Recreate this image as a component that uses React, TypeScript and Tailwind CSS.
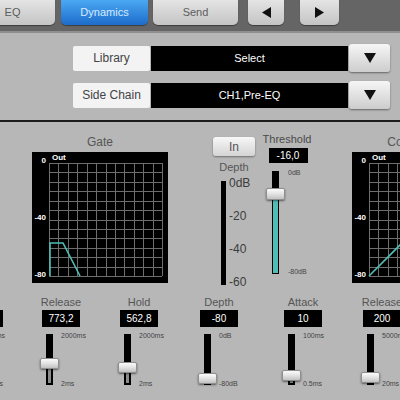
import React from "react";

const TEAL = "#4dbfb6";

function Tri({ dir }: { dir: "left" | "right" | "down" }) {
  if (dir === "down") {
    return (
      <svg width="12" height="10" viewBox="0 0 12 10">
        <polygon points="0,0 12,0 6,10" fill="#111" />
      </svg>
    );
  }
  return (
    <svg width="9" height="11" viewBox="0 0 9 11">
      <polygon points={dir === "left" ? "9,0 9,11 0,5.5" : "0,0 0,11 9,5.5"} fill="#111" />
    </svg>
  );
}

function Tab({ className, children }: { className: string; children: React.ReactNode }) {
  return (
    <div
      className={`flex h-[25px] shrink-0 items-center justify-center rounded-b-[5px] bg-gradient-to-b from-[#e4e4e4] to-[#c4c4c4] text-[11px] text-[#5c5c5c] shadow-[0_1px_1px_rgba(0,0,0,0.4)] ${className}`}
    >
      {children}
    </div>
  );
}

function SelectRow({ label, value }: { label: string; value: string }) {
  return (
    <div className="flex h-[28px] items-center">
      <div className="flex h-[25px] w-[77px] items-center justify-center rounded-[2px] bg-[#f3f3f3] text-[12px] text-[#444]">
        {label}
      </div>
      <div className="ml-[1px] flex h-[25px] w-[197px] items-center justify-center bg-black text-[11px] text-white">
        {value}
      </div>
      <div className="ml-[1px] flex h-[28px] w-[41px] items-center justify-center rounded-[3px] bg-gradient-to-b from-[#f6f6f6] to-[#cdcdcd] shadow-[0_1px_2px_rgba(0,0,0,0.45)]">
        <Tri dir="down" />
      </div>
    </div>
  );
}

const GX = Array.from({ length: 13 }, (_, i) => Math.round(17 + (i * 113) / 12) + 0.5);
const GY = Array.from({ length: 13 }, (_, i) => Math.round(11 + (i * 113) / 12) + 0.5);

function Graph({ curve }: { curve: string }) {
  return (
    <svg width="136" height="131" viewBox="0 0 136 131" className="block bg-black">
      {GX.map((x, i) => (
        <line key={"v" + i} x1={x} x2={x} y1={11} y2={124} stroke="#6e6e6e" strokeWidth="1" shapeRendering="crispEdges" />
      ))}
      {GY.map((y, i) => (
        <line key={"h" + i} x1={17} x2={130} y1={y} y2={y} stroke="#6e6e6e" strokeWidth="1" shapeRendering="crispEdges" />
      ))}
      <g fill="#fff" fontSize="8" fontWeight="bold" fontFamily="'Liberation Sans', Arial, sans-serif">
        <text x="14" y="11" textAnchor="end">0</text>
        <text x="14" y="68" textAnchor="end">-40</text>
        <text x="14" y="125" textAnchor="end">-80</text>
        <text x="20" y="8">Out</text>
      </g>
      <polyline points={curve} fill="none" stroke={TEAL} strokeWidth="1.6" />
    </svg>
  );
}

function Knob({ top, className }: { top: number; className: string }) {
  return (
    <div
      className={`absolute left-[-6px] w-[19px] rounded-[2px] border border-[#8e8e8e] bg-gradient-to-b from-[#fbfbfb] via-[#e2e2e2] to-[#c2c2c2] shadow-[0_1px_2px_rgba(0,0,0,0.5)] ${className}`}
      style={{ top }}
    />
  );
}

type Param = {
  label: string;
  value: string;
  max: string;
  min: string;
  knob: number;
  ml: string;
};

const PARAMS: Param[] = [
  { label: "Range", value: "30", max: "100ms", min: "0.5ms", knob: 30, ml: "ml-[-35px]" },
  { label: "Release", value: "773,2", max: "2000ms", min: "2ms", knob: 24, ml: "ml-[39px]" },
  { label: "Hold", value: "562,8", max: "2000ms", min: "2ms", knob: 28, ml: "ml-[40px]" },
  { label: "Depth", value: "-80", max: "0dB", min: "-80dB", knob: 39, ml: "ml-[42px]" },
  { label: "Attack", value: "10", max: "100ms", min: "0.5ms", knob: 36, ml: "ml-[46px]" },
  { label: "Release", value: "200", max: "5000ms", min: "20ms", knob: 38, ml: "ml-[41px]" },
];

function ParamColumn({ p }: { p: Param }) {
  return (
    <div className={`flex w-[38px] shrink-0 flex-col items-center ${p.ml}`}>
      <div className="whitespace-nowrap text-[11px] leading-[13px] text-[#555]">{p.label}</div>
      <div className="mt-[1px] flex h-[17px] w-[38px] items-center justify-center bg-black text-[10px] text-white">
        {p.value}
      </div>
      <div className="mt-[7px] flex h-[51px] w-full">
        <div className="relative ml-[4px] h-full w-[7px] shrink-0 bg-black">
          <div className="absolute bottom-[2px] left-[2px] right-[2px] bg-[#8c8c8c]" style={{ top: p.knob + 8 }} />
          <Knob top={p.knob} className="h-[11px]" />
        </div>
        <div className="ml-[8px] mt-[-3px] flex h-[57px] flex-col justify-between whitespace-nowrap text-[7px] leading-[9px] text-[#444]">
          <span>{p.max}</span>
          <span>{p.min}</span>
        </div>
      </div>
    </div>
  );
}

export default function App() {
  return (
    <div className="h-[400px] w-[400px] overflow-hidden bg-[#b7b7b7] font-['Liberation_Sans',Arial,sans-serif]">
      {/* tab bar */}
      <div className="flex h-[33px] border-b-2 border-[#8f8f8f] bg-[#656565]">
        <Tab className="ml-[-30px] w-[85px]">EQ</Tab>
        <div className="ml-[6px] flex h-[25px] w-[87px] shrink-0 items-center justify-center rounded-b-[5px] bg-gradient-to-b from-[#4ba8f2] to-[#1d6ccb] text-[11px] text-[#d6ebff] shadow-[0_1px_1px_rgba(0,0,0,0.4)]">
          Dynamics
        </div>
        <Tab className="ml-[5px] w-[85px]">Send</Tab>
        <Tab className="ml-[10px] w-[36px]">
          <Tri dir="left" />
        </Tab>
        <Tab className="ml-[16px] w-[39px]">
          <Tri dir="right" />
        </Tab>
      </div>

      {/* library / side chain */}
      <div className="flex h-[87px] flex-col gap-[9px] pl-[73px] pt-[11px]">
        <SelectRow label="Library" value="Select" />
        <SelectRow label="Side Chain" value="CH1,Pre-EQ" />
      </div>
      <div className="h-[2px] bg-[#1c1c1c]" />

      {/* graphs row */}
      <div className="flex h-[168px] items-start">
        <div className="ml-[32px] flex w-[136px] shrink-0 flex-col items-center">
          <div className="mt-[13px] text-[12px] leading-[14px] text-[#555]">Gate</div>
          <div className="mt-[3px]">
            <Graph curve="18,124 18,91 31,91 48,124" />
          </div>
        </div>

        <div className="ml-[45px] flex w-[42px] shrink-0 flex-col">
          <div className="mt-[15px] flex h-[19px] w-[42px] items-center justify-center rounded-[3px] bg-gradient-to-b from-[#f7f7f7] to-[#d4d4d4] text-[12px] text-[#555] shadow-[0_1px_2px_rgba(0,0,0,0.4)]">
            In
          </div>
          <div className="mt-[5px] text-center text-[11px] leading-[13px] text-[#555]">Depth</div>
          <div className="mt-[7px] flex">
            <div className="ml-[8px] h-[104px] w-[5px] bg-black" />
            <div className="ml-[3px] mt-[-4px] flex h-[111px] flex-col justify-between text-[12px] leading-[12px] text-[#3c3c3c]">
              <span>0dB</span>
              <span>-20</span>
              <span>-40</span>
              <span>-60</span>
            </div>
          </div>
        </div>

        <div className="ml-[11px] flex w-[42px] shrink-0 flex-col items-center">
          <div className="mt-[11px] whitespace-nowrap text-[11px] leading-[13px] text-[#4a4a4a]">Threshold</div>
          <div className="ml-[2px] mt-[2px] flex h-[15px] w-[39px] items-center justify-center bg-black text-[10px] text-white">
            -16,0
          </div>
          <div className="mt-[8px] flex h-[103px] w-full">
            <div className="relative ml-[6px] h-full w-[7px] shrink-0 bg-black">
              <div className="absolute bottom-[1px] left-[1px] right-[1px] top-[29px]" style={{ background: TEAL }} />
              <Knob top={17} className="h-[12px]" />
            </div>
            <div className="ml-[9px] mt-[-3px] flex h-[108px] flex-col justify-between whitespace-nowrap text-[7px] leading-[9px] text-[#444]">
              <span>0dB</span>
              <span>-80dB</span>
            </div>
          </div>
        </div>

        <div className="ml-[44px] flex w-[136px] shrink-0 flex-col items-center">
          <div className="mt-[13px] text-[12px] leading-[14px] text-[#555]">Compressor</div>
          <div className="mt-[3px]">
            <Graph curve="17,124 107,34 130,28" />
          </div>
        </div>
      </div>

      {/* parameter faders */}
      <div className="flex pt-[6px]">
        {PARAMS.map((p, i) => (
          <ParamColumn key={i} p={p} />
        ))}
      </div>
    </div>
  );
}
